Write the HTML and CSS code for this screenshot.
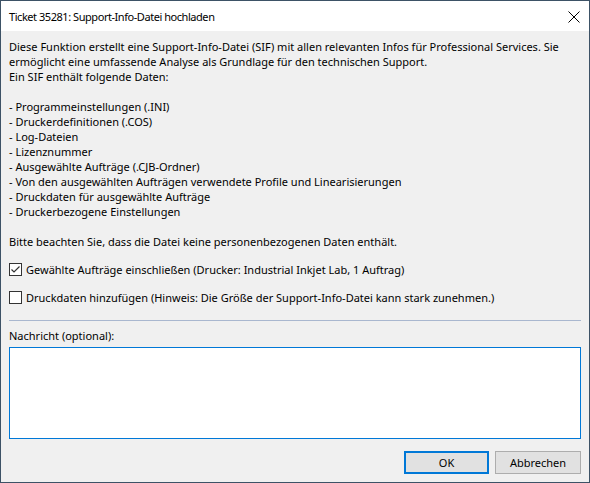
FILE: index.html
```html
<!DOCTYPE html>
<html lang="de">
<head>
    <meta charset="UTF-8">
    <title>Ticket 35281: Support-Info-Datei hochladen</title>
    <link rel="stylesheet" href="styles.css">
</head>
<body>

    <div class="window">
        <div class="titlebar">
            <span class="title">Ticket 35281: Support-Info-Datei hochladen</span>
            <svg class="close" width="12" height="12" viewBox="0 0 12 12">
                <path d="M0.5 0.5 L11.5 11.5 M11.5 0.5 L0.5 11.5" stroke="#000" stroke-width="1" fill="none"/>
            </svg>
        </div>

        <div class="content">
            <p class="info">Diese Funktion erstellt eine Support-Info-Datei (SIF) mit allen relevanten Infos für Professional Services. Sie<br>
            ermöglicht eine umfassende Analyse als Grundlage für den technischen Support.<br>
            Ein SIF enthält folgende Daten:</p>

            <ul class="data-list">
                <li>- Programmeinstellungen (.INI)</li>
                <li>- Druckerdefinitionen (.COS)</li>
                <li>- Log-Dateien</li>
                <li>- Lizenznummer</li>
                <li>- Ausgewählte Aufträge (.CJB-Ordner)</li>
                <li>- Von den ausgewählten Aufträgen verwendete Profile und Linearisierungen</li>
                <li>- Druckdaten für ausgewählte Aufträge</li>
                <li>- Druckerbezogene Einstellungen</li>
            </ul>

            <p class="info last">Bitte beachten Sie, dass die Datei keine personenbezogenen Daten enthält.</p>

            <label class="check">
                <span class="box">
                    <svg width="11" height="11" viewBox="0 0 11 11">
                        <path d="M1.5 5.5 L4 8 L9.5 2.5" stroke="#333" stroke-width="1.2" fill="none"/>
                    </svg>
                </span>
                Gewählte Aufträge einschließen (Drucker: Industrial Inkjet Lab, 1 Auftrag)
            </label>

            <label class="check">
                <span class="box"></span>
                Druckdaten hinzufügen (Hinweis: Die Größe der Support-Info-Datei kann stark zunehmen.)
            </label>

            <div class="separator"></div>

            <div class="message">
                <label for="message">Nachricht (optional):</label>
                <textarea id="message" name="message"></textarea>
            </div>

            <div class="button-row">
                <button type="button" class="default">OK</button>
                <button type="button">Abbrechen</button>
            </div>
        </div>
    </div>

</body>
</html>
```

FILE: styles.css
```css
body {
    margin: 0;
    font-family: "Noto Sans", sans-serif;
    font-size: 11px;
    color: #000;
}

.window {
    width: 590px;
    height: 483px;
    box-sizing: border-box;
    border: 1px solid #3d5266;
    background-color: #f0f0f0;
    display: flex;
    flex-direction: column;
}

.titlebar {
    height: 30px;
    flex-shrink: 0;
    background-color: white;
    display: flex;
    align-items: center;
    justify-content: space-between;
    padding: 0 9px 0 8px;
}

.title {
    letter-spacing: -0.45px;
}

.close {
    margin-top: 1px;
}

.content {
    padding: 8px 8px 0 8px;
    display: flex;
    flex-direction: column;
}

.info {
    margin: 0 0 15px 0;
    line-height: 15px;
}

.info.last {
    margin-bottom: 13px;
}

.data-list {
    list-style: none;
    margin: 0 0 15px 0;
    padding: 0;
    line-height: 15px;
}

.check {
    display: flex;
    align-items: center;
    gap: 4px;
    height: 15px;
    line-height: 15px;
    margin-bottom: 13px;
}

.box {
    width: 11px;
    height: 11px;
    border: 1px solid #333;
    background-color: white;
    display: flex;
    align-items: center;
    justify-content: center;
}

.separator {
    height: 1px;
    background-color: #a9b7cf;
    margin: 2px 0 7px 0;
}

.message label {
    display: block;
    line-height: 15px;
    margin-bottom: 4px;
}

.message textarea {
    display: block;
    width: 100%;
    height: 92px;
    box-sizing: border-box;
    border: 1px solid #0078d7;
    background-color: white;
    resize: none;
    outline: none;
    margin: 0;
}

.button-row {
    display: flex;
    justify-content: flex-end;
    gap: 6px;
    margin-top: 12px;
}

.button-row button {
    width: 86px;
    height: 23px;
    font-family: "Noto Sans", sans-serif;
    font-size: 11px;
    color: #000;
    background-color: #e1e1e1;
    border: 1px solid #adadad;
    padding: 0;
}

.button-row button.default {
    width: 85px;
    border: 2px solid #0078d7;
}
```
